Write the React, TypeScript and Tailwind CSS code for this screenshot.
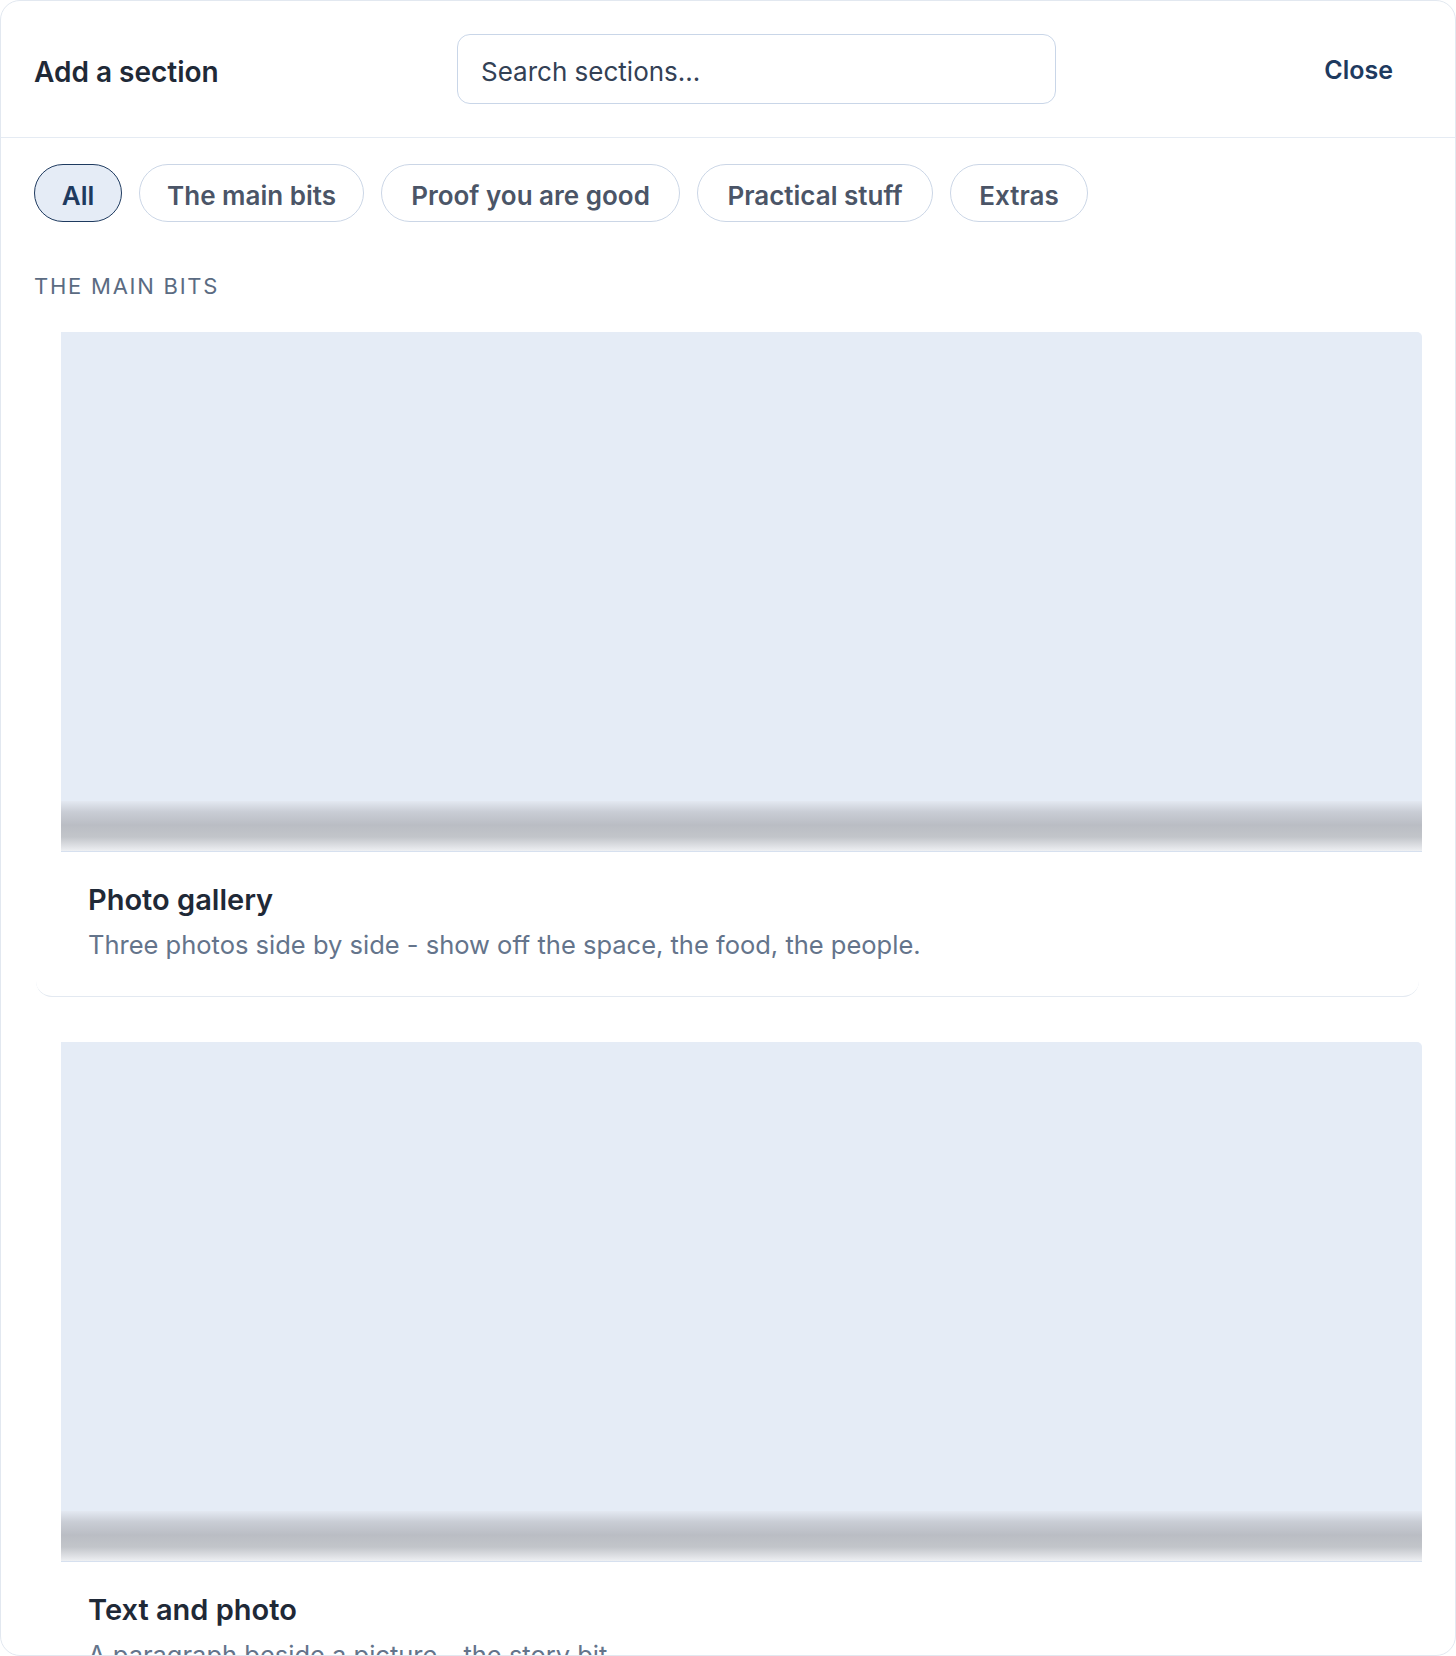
import React from "react";

type Chip = { label: string; width: string; active?: boolean };

const chips: Chip[] = [
  { label: "All", width: "w-[88px]", active: true },
  { label: "The main bits", width: "w-[225px]" },
  { label: "Proof you are good", width: "w-[299px]" },
  { label: "Practical stuff", width: "w-[236px]" },
  { label: "Extras", width: "w-[138px]" },
];

type Section = { title: string; description: string };

const sections: Section[] = [
  {
    title: "Photo gallery",
    description: "Three photos side by side - show off the space, the food, the people.",
  },
  {
    title: "Text and photo",
    description: "A paragraph beside a picture - the story bit.",
  },
];

function SectionCard({ section }: { section: Section }) {
  return (
    <div className="ml-[2px] mr-[3px] rounded-[16px] border-b border-[#e3e9f1] bg-white">
      {/* preview thumbnail */}
      <div className="ml-[25px] -mr-[3px] h-[520px] rounded-tr-[5px] bg-[#e5ecf6] flex flex-col justify-end border-b border-[#d6e0ef]">
        <div className="h-[50px] bg-[linear-gradient(to_bottom,#e3e8f1_0%,#c9cdd5_22%,#babdc4_48%,#c2c5ca_72%,#e1e3e7_92%,#eef0f3_100%)]" />
      </div>
      <div className="pl-[52px] pr-[40px] pt-[30px] pb-[34px]">
        <h3 className="text-[29px] leading-[36px] font-semibold text-[#1f2937]">{section.title}</h3>
        <p className="mt-[10px] text-[25.5px] leading-[34px] text-[#64748b]">{section.description}</p>
      </div>
    </div>
  );
}

export default function App() {
  return (
    <div className="w-[1456px] h-[1656px] bg-white font-['Inter',sans-serif]">
      <div className="h-full flex flex-col border border-[#e2e8f0] rounded-[20px] overflow-hidden bg-white">
        <header className="h-[137px] shrink-0 border-b border-[#e5ebf3] flex items-center pl-[33px] pr-[62px]">
          <h2 className="w-[423px] pt-[6px] text-[28px] font-semibold text-[#1f2937]">Add a section</h2>
          <input
            type="text"
            placeholder="Search sections..."
            className="w-[599px] h-[70px] rounded-[13px] border border-[#c9d6e8] px-[23px] pt-[4px] text-[26px] text-[#334155] placeholder:text-[#334155] outline-none"
          />
          <div className="flex-1" />
          <button className="pt-[4px] text-[25px] font-semibold text-[#1e3a5f]">Close</button>
        </header>

        <div className="flex-1 overflow-hidden px-[33px] pt-[26px]">
          <div className="flex gap-[17px]">
            {chips.map((c) =>
              c.active ? (
                <button
                  key={c.label}
                  className={`${c.width} h-[58px] pt-[5px] rounded-full border-[1.5px] border-[#1e3a5f] bg-[#e5ecf6] text-[26px] font-semibold text-[#1e3a5f] flex items-center justify-center`}
                >
                  {c.label}
                </button>
              ) : (
                <button
                  key={c.label}
                  className={`${c.width} h-[58px] pt-[5px] rounded-full border-[1.5px] border-[#cbd6e6] bg-white text-[26px] font-semibold text-[#4b5567] flex items-center justify-center`}
                >
                  {c.label}
                </button>
              )
            )}
          </div>

          <div className="mt-[51px] text-[22px] leading-[26px] tracking-[0.08em] uppercase text-[#5b6b82]">
            The main bits
          </div>

          <div className="mt-[33px] flex flex-col gap-[45px]">
            {sections.map((s) => (
              <SectionCard key={s.title} section={s} />
            ))}
          </div>
        </div>
      </div>
    </div>
  );
}
